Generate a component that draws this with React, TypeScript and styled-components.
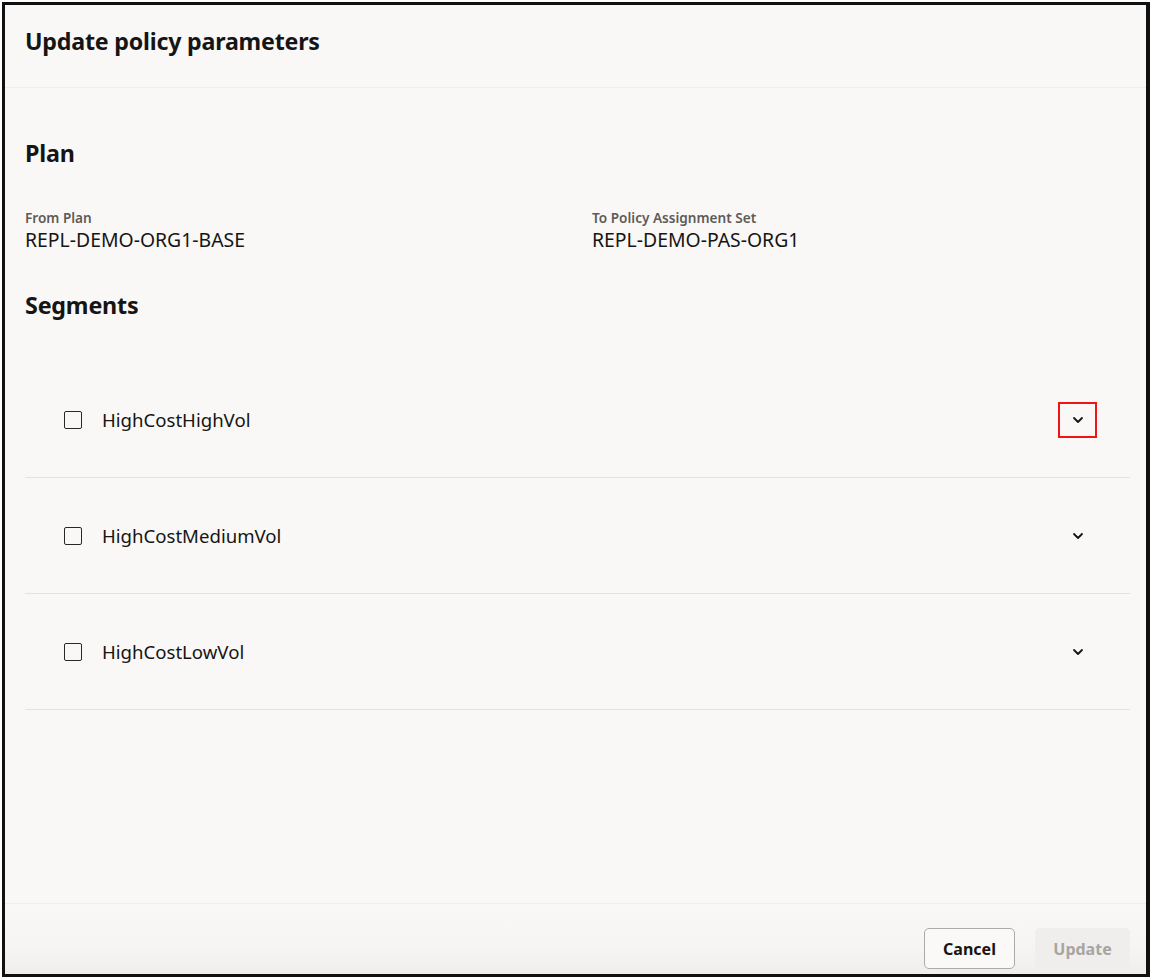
import React from "react";
import styled, { createGlobalStyle } from "styled-components";

const Global = createGlobalStyle`
  html, body { margin: 0; padding: 0; background: #ffffff; }
  body { font-family: "Noto Sans", "Open Sans", Arial, sans-serif; color: #161513; }
  * { box-sizing: border-box; }
`;

const Frame = styled.div`
  margin: 2px 0 0 2px;
  width: 1148px;
  height: 975px;
  border: 3px solid #111;
  border-right-width: 4px;
  background: #f9f8f7;
  display: flex;
  flex-direction: column;
`;

const Header = styled.header`
  height: 83px;
  padding: 0 16px 0 20px;
  display: flex;
  align-items: center;
  border-bottom: 1px solid #efedea;
  flex: none;
`;

const Title = styled.h1`
  margin: 0;
  font-size: 23.2px;
  font-weight: 700;
  letter-spacing: -0.2px;
  padding-bottom: 10px;
`;

const Body = styled.main`
  flex: 1;
  padding: 0 16px 0 20px;
  display: flex;
  flex-direction: column;
`;

const SectionTitle = styled.h2<{ $top: number }>`
  margin: ${(p) => p.$top}px 0 0 0;
  font-size: 23.3px;
  font-weight: 700;
  line-height: 30px;
  letter-spacing: -0.2px;
`;

const FieldGrid = styled.div`
  display: grid;
  grid-template-columns: 567px 1fr;
  margin-top: 40px;
`;

const Field = styled.div`
  display: flex;
  flex-direction: column;
`;

const Label = styled.span`
  font-size: 13.6px;
  font-weight: 600;
  color: #5e5b57;
  line-height: 19px;
`;

const Value = styled.span`
  font-size: 19.4px;
  line-height: 26px;
  color: #161513;
`;

const List = styled.div`
  margin-top: 42px;
  display: flex;
  flex-direction: column;
`;

const Row = styled.div`
  height: 116px;
  border-bottom: 1px solid #e4e2de;
  display: flex;
  align-items: center;
  padding: 0 0 0 39px;
`;

const Box = styled.span`
  width: 18px;
  height: 18px;
  border: 1.5px solid #2a2824;
  border-radius: 2px;
  flex: none;
`;

const RowLabel = styled.span`
  margin-left: 20px;
  font-size: 18.6px;
  color: #161513;
  flex: 1;
`;

const ChevronButton = styled.button<{ $focused?: boolean }>`
  width: 39px;
  height: 36px;
  margin-right: 33px;
  border: 2px solid ${(p) => (p.$focused ? "#f01414" : "transparent")};
  background: transparent;
  padding: 0;
  display: flex;
  align-items: center;
  justify-content: center;
  color: #161513;
`;

const Footer = styled.footer`
  flex: none;
  height: 71px;
  border-top: 1px solid #efedea;
  padding: 24px 16px 0 20px;
  display: flex;
  align-items: flex-start;
  justify-content: flex-end;
  gap: 20px;
  background: linear-gradient(to bottom, #f9f8f7 0%, #f6f5f4 60%, #efeeed 100%);
`;

const Button = styled.button<{ $disabled?: boolean }>`
  height: 41px;
  border-radius: 5px;
  font-family: inherit;
  font-size: 16px;
  font-weight: 700;
  padding: 0;
  border: 1px solid ${(p) => (p.$disabled ? "transparent" : "#aeaba6")};
  background: ${(p) => (p.$disabled ? "#efeeec" : "#faf9f8")};
  color: ${(p) => (p.$disabled ? "#a8a5a1" : "#161513")};
  width: ${(p) => (p.$disabled ? "95px" : "91px")};
`;

const Chevron = () => (
  <svg width="12" height="8" viewBox="0 0 12 8" fill="none">
    <path d="M2 2l4 4 4-4" stroke="currentColor" strokeWidth="1.8" strokeLinecap="round" strokeLinejoin="round" />
  </svg>
);

const segments = ["HighCostHighVol", "HighCostMediumVol", "HighCostLowVol"];

export default function App() {
  return (
    <>
      <Global />
      <Frame>
        <Header>
          <Title>Update policy parameters</Title>
        </Header>
        <Body>
          <SectionTitle $top={50}>Plan</SectionTitle>
          <FieldGrid>
            <Field>
              <Label>From Plan</Label>
              <Value>REPL-DEMO-ORG1-BASE</Value>
            </Field>
            <Field>
              <Label>To Policy Assignment Set</Label>
              <Value>REPL-DEMO-PAS-ORG1</Value>
            </Field>
          </FieldGrid>
          <SectionTitle $top={37}>Segments</SectionTitle>
          <List>
            {segments.map((s, i) => (
              <Row key={s}>
                <Box />
                <RowLabel>{s}</RowLabel>
                <ChevronButton $focused={i === 0} aria-label="expand">
                  <Chevron />
                </ChevronButton>
              </Row>
            ))}
          </List>
        </Body>
        <Footer>
          <Button>Cancel</Button>
          <Button $disabled>Update</Button>
        </Footer>
      </Frame>
    </>
  );
}
